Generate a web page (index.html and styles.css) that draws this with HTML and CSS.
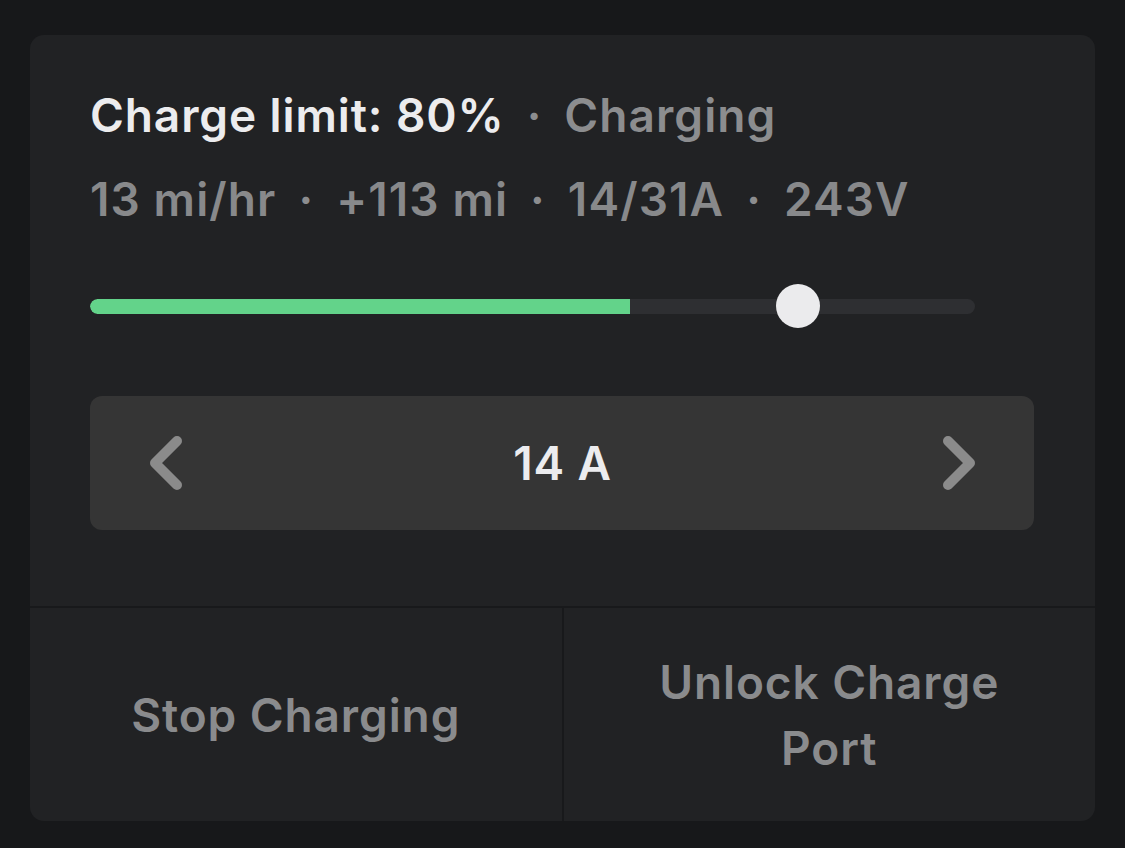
FILE: index.html
```html
<!DOCTYPE html>
<html>
<head>
<meta charset="utf-8">
<link rel="stylesheet" href="styles.css">
</head>
<body>
<div class="card">
  <div class="top">
    <div class="title"><span class="strong">Charge limit: 80%</span><span class="dot">·</span><span class="muted">Charging</span></div>
    <div class="stats"><span>13 mi/hr</span><span class="dot">·</span><span>+113 mi</span><span class="dot">·</span><span>14/31A</span><span class="dot">·</span><span>243V</span></div>
    <div class="slider">
      <div class="track">
        <div class="fill" style="width:61%"></div>
      </div>
      <div class="knob" style="left:80%"></div>
    </div>
    <div class="stepper">
      <svg class="chev" width="32" height="54" viewBox="0 0 32 54"><path d="M27 5 L5 27 L27 49" fill="none" stroke="#8b8b8b" stroke-width="10" stroke-linecap="round" stroke-linejoin="round"/></svg>
      <span class="value">14 A</span>
      <svg class="chev" width="32" height="54" viewBox="0 0 32 54"><path d="M5 5 L27 27 L5 49" fill="none" stroke="#8b8b8b" stroke-width="10" stroke-linecap="round" stroke-linejoin="round"/></svg>
    </div>
  </div>
  <div class="actions">
    <div class="btn">Stop Charging</div>
    <div class="btn">Unlock Charge Port</div>
  </div>
</div>
</body>
</html>
```
FILE: styles.css
```css
html, body {
  margin: 0;
  padding: 0;
  background: #17181a;
}
body {
  padding: 35px 30px 27px 30px;
  font-family: Inter, "Noto Sans", sans-serif;
}
.card {
  width: 1065px;
  height: 786px;
  background: #212224;
  border-radius: 14px;
  overflow: hidden;
  display: flex;
  flex-direction: column;
}
.top {
  padding: 55px 61px 0 60px;
  height: 573px;
  flex-shrink: 0;
  box-sizing: border-box;
  border-bottom: 2px solid #18191b;
}
.title, .stats {
  font-size: 46px;
  line-height: 50px;
  letter-spacing: 0.9px;
  white-space: nowrap;
  display: flex;
  align-items: center;
}
.title .strong {
  color: #ececee;
  font-weight: 600;
}
.title .muted {
  color: #8c8d8f;
  font-weight: 600;
  letter-spacing: 1.1px;
}
.stats {
  margin-top: 34px;
  color: #88898b;
  font-weight: 600;
  letter-spacing: 1.1px;
}
.dot {
  color: #8c8d8f;
  margin: 0 22px;
  font-weight: 600;
}
.slider {
  position: relative;
  margin-top: 60px;
  margin-right: 59px;
  height: 44px;
  display: flex;
  align-items: center;
}
.track {
  width: 100%;
  height: 15px;
  border-radius: 8px;
  background: #2e2f32;
  overflow: hidden;
}
.fill {
  height: 100%;
  background: #63d38a;
  border-radius: 8px 0 0 8px;
}
.knob {
  position: absolute;
  top: 0;
  width: 44px;
  height: 44px;
  margin-left: -22px;
  border-radius: 50%;
  background: #ebebed;
}
.stepper {
  margin-top: 68px;
  height: 134px;
  border-radius: 12px;
  background: #353535;
  display: flex;
  align-items: center;
  justify-content: space-between;
  padding: 0 59px 0 60px;
}
.value {
  color: #ececee;
  font-size: 46px;
  letter-spacing: 0.9px;
  font-weight: 600;
}
.actions {
  flex: 1;
  display: flex;
}
.btn {
  flex: 1;
  display: flex;
  align-items: center;
  justify-content: center;
  text-align: center;
  padding: 0 60px;
  color: #8a8b8d;
  font-size: 46px;
  letter-spacing: 0.9px;
  font-weight: 600;
  line-height: 66px;
}
.btn + .btn {
  border-left: 2px solid #18191b;
}
```
